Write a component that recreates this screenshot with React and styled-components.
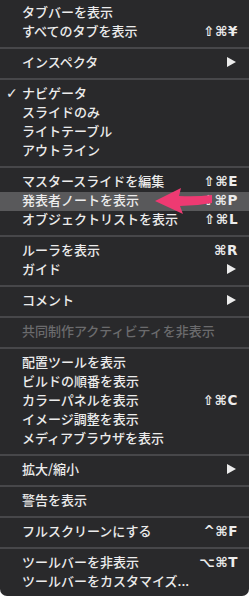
import { styled, createGlobalStyle } from "styled-components";

const Global = createGlobalStyle`
  html, body {
    margin: 0;
    padding: 0;
    background: #ffffff;
  }
`;

const Menu = styled.ul`
  /* 메뉴 전체 */
  position: relative;
  list-style: none;
  margin: 0;
  padding: 4px 0 4px 0;
  width: 249px;
  height: 596px;
  box-sizing: border-box;
  background: #29292b;
  border-radius: 0 0 7px 7px;
  font-family: "Noto Sans CJK JP", "Noto Sans", sans-serif;
  overflow: hidden;
`;

const Item = styled.li`
  display: grid;
  grid-template-columns: 22px 1fr auto;
  align-items: center;
  box-sizing: border-box;
  height: 19px;
  padding: 0 11px 3px 0;
  font-size: 13px;
  font-weight: 500;
  color: ${(p) => (p.$disabled ? "#6b6b6d" : "#ececec")};
  background: ${(p) => (p.$active ? "#59595b" : "transparent")};
  white-space: nowrap;
`;

const Check = styled.span`
  font-size: 14px;
  padding-left: 6px;
  font-family: "DejaVu Sans", sans-serif;
  font-weight: 700;
`;

const Label = styled.span`
  line-height: 16px;
`;

const Shortcut = styled.span`
  font-family: "DejaVu Sans", "Noto Sans CJK JP", sans-serif;
  font-weight: 700;
  font-size: 13.5px;
  line-height: 16px;
  letter-spacing: 0.5px;
  text-align: right;
`;

const Separator = styled.li`
  height: 12px;
  display: flex;
  align-items: center;

  &::after {
    content: "";
    flex: 1;
    height: 2px;
    background: #47474a;
  }
`;

const Arrow = styled.svg`
  position: absolute;
  left: 0;
  top: 0;
  pointer-events: none;
`;

const Submenu = () => (
  <svg width="9" height="10" viewBox="0 0 9 10" style={{ marginRight: "2px" }}>
    <polygon points="0,0 9,5 0,10" fill="#ececec" />
  </svg>
);

const items = [
  { label: "タブバーを表示" },
  { label: "すべてのタブを表示", key: "⇧⌘¥" },
  "sep",
  { label: "インスペクタ", sub: true },
  "sep",
  { label: "ナビゲータ", checked: true },
  { label: "スライドのみ" },
  { label: "ライトテーブル" },
  { label: "アウトライン" },
  "sep",
  { label: "マスタースライドを編集", key: "⇧⌘E" },
  { label: "発表者ノートを表示", key: "⇧⌘P", active: true },
  { label: "オブジェクトリストを表示", key: "⇧⌘L" },
  "sep",
  { label: "ルーラを表示", key: "⌘R" },
  { label: "ガイド", sub: true },
  "sep",
  { label: "コメント", sub: true },
  "sep",
  { label: "共同制作アクティビティを非表示", disabled: true },
  "sep",
  { label: "配置ツールを表示" },
  { label: "ビルドの順番を表示" },
  { label: "カラーパネルを表示", key: "⇧⌘C" },
  { label: "イメージ調整を表示" },
  { label: "メディアブラウザを表示" },
  "sep",
  { label: "拡大/縮小", sub: true },
  "sep",
  { label: "警告を表示" },
  "sep",
  { label: "フルスクリーンにする", key: "^⌘F" },
  "sep",
  { label: "ツールバーを非表示", key: "⌥⌘T" },
  { label: "ツールバーをカスタマイズ..." },
];

const App = () => {
  return (
    <>
      <Global />
      <Menu>
        {items.map((it, i) =>
          it === "sep" ? (
            <Separator key={i} />
          ) : (
            <Item key={i} $disabled={it.disabled} $active={it.active}>
              <Check>{it.checked ? "✓" : ""}</Check>
              <Label>{it.label}</Label>
              {it.sub ? <Submenu /> : <Shortcut>{it.key || ""}</Shortcut>}
            </Item>
          )
        )}
        <Arrow width="249" height="596" viewBox="0 0 249 596">
          <path
            d="M155,201 L181,188 L179,196 Q196,197 212,195 L212,203 Q196,206 180,206 L183,214 Z"
            fill="#ee3a72"
          />
        </Arrow>
      </Menu>
    </>
  );
};

export default App;
